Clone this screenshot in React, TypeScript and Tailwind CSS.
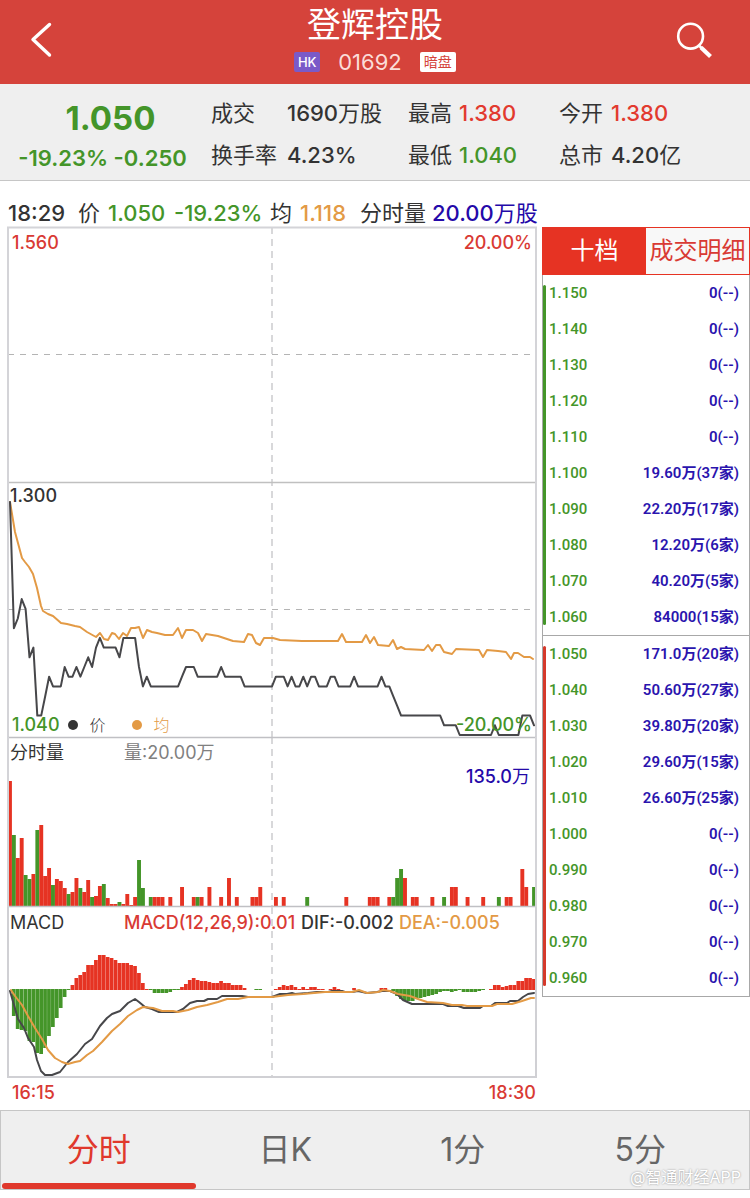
import { clsx } from "clsx";
import { useState } from "react";

type Bar = [index: number, value: number, color?: "up" | "down"];

type Level = {
    price: string;
    volume: string;
};

const MINUTES = 135;
const CHART_WIDTH = 528;
const STEP = CHART_WIDTH / MINUTES;

const RED = "#e63323";
const GREEN = "#449529";
const ORANGE = "#e39a45";
const DARK = "#47474a";

// last price per minute, in ticks of 0.01 above 1.040, as [ticks, minutes]
const priceRuns: [number, number][] = [
    [24, 1], [11, 1], [12, 1], [14, 1], [13, 1], [8, 1], [9, 1], [2, 2], [4, 1],
    [6, 1], [5, 3], [7, 1], [6, 2], [7, 1], [6, 1], [7, 1], [8, 1], [7, 1],
    [9, 1], [10, 1], [9, 4], [8, 1], [10, 4], [7, 1], [5, 1], [6, 1], [5, 8],
    [6, 1], [7, 3], [6, 6], [7, 1], [6, 5], [5, 8], [6, 3], [5, 1], [6, 1],
    [5, 2], [6, 1], [5, 1], [6, 2], [5, 3], [6, 2], [5, 4], [6, 1], [5, 6],
    [6, 1], [5, 2], [4, 1], [3, 1], [2, 11], [1, 4], [0, 9], [1, 1], [0, 6],
    [2, 3], [1, 1],
];

const pricePoints = priceRuns
    .flatMap(([ticks, minutes]) => Array<number>(minutes).fill(ticks))
    .map((ticks, i) => `${((i + 0.5) * STEP).toFixed(1)},${(508 - ticks * 9.71).toFixed(1)}`)
    .join(" ");

const averagePoints =
    "2,275 7,305 14,331 17,335 21,340 25,347 29,361 33,379 35,384 40,387 45,389 53,396 59,397 67,399 72,400 79,405 88,410 92,406 96,412 100,413 104,406 107,407 111,412 115,406 119,409 123,401 127,401 131,400 135,411 139,403 144,405 149,406 157,408 165,408 170,401 174,411 178,403 185,403 190,406 194,414 198,407 204,408 210,409 219,412 225,414 236,415 240,407 244,408 248,416 252,418 256,411 265,411 272,413 294,414 300,414 330,414 334,407 338,415 354,415 358,408 362,416 366,410 370,418 381,419 385,413 389,422 393,420 397,422 416,423 420,418 424,424 428,418 432,418 436,425 444,427 448,422 471,423 475,430 479,423 490,424 498,425 503,432 506,426 510,426 516,430 522,430 525,432";

const volumeBars: Bar[] = [
    [0, 125, "up"], [1, 71, "down"], [2, 48, "up"], [3, 68, "up"], [4, 31, "down"],
    [5, 27, "down"], [6, 32, "up"], [7, 76, "down"], [8, 81, "up"], [9, 30, "up"],
    [10, 38, "up"], [11, 21, "down"], [12, 27, "up"], [13, 25, "up"], [14, 18, "up"],
    [15, 12, "down"], [16, 14, "up"], [17, 28, "up"], [18, 18, "down"], [19, 14, "up"],
    [20, 26, "up"], [21, 9, "down"], [22, 10, "up"], [23, 20, "up"], [24, 22, "down"],
    [25, 8, "up"], [26, 2, "up"], [27, 2, "up"], [28, 4, "down"], [29, 2, "up"],
    [30, 12, "up"], [31, 1, "up"], [32, 9, "up"], [33, 46, "down"], [34, 18, "down"],
    [36, 9, "down"], [37, 9, "up"], [38, 9, "up"], [39, 9, "up"], [41, 9, "up"],
    [44, 19, "up"], [47, 9, "up"], [48, 9, "down"], [49, 9, "up"], [51, 19, "up"],
    [54, 9, "up"], [56, 28, "up"], [58, 9, "up"], [62, 9, "up"], [63, 9, "up"],
    [64, 19, "up"], [68, 9, "up"], [70, 9, "up"], [76, 9, "down"], [86, 9, "up"],
    [92, 9, "up"], [93, 9, "up"], [94, 9, "up"], [97, 9, "up"], [98, 9, "down"],
    [99, 28, "down"], [100, 37, "down"], [101, 28, "up"], [103, 9, "up"], [104, 9, "up"],
    [108, 9, "up"], [111, 9, "down"], [113, 19, "up"], [114, 19, "up"], [117, 9, "up"],
    [121, 9, "up"], [125, 9, "down"], [127, 9, "up"], [128, 9, "up"], [131, 37, "up"],
    [132, 19, "up"], [134, 19, "down"],
];

// one value per minute, positive above the zero line
const macdValues = [
    0, -27, -40, -41, -42, -52, -53, -64, -65, -59, -47, -38, -29, -19, -8, -1,
    5, 12, 15, 18, 25, 25, 30, 35, 35, 33, 32, 30, 27, 27, 27, 25, 24, 17, 7, 1,
    -1, -4, -4, -4, -4, -3, -1, -1, 3, 6, 10, 12, 10, 9, 9, 8, 7, 7, 9, 7, 7, 5,
    5, 5, 2, 0, 0, -1, -1, 0, 0, 0, 1, 3, 5, 4, 5, 3, 1, 3, 1, 3, 3, 1, 1, 0, 1,
    3, 1, 0, 0, 0, 2, 0, 0, 0, 0, 0, 0, 2, 2, 0, -2, -7, -10, -12, -12, -12,
    -10, -9, -8, -7, -6, -5, -3, -2, -2, -3, -2, -1, -3, -3, -3, -3, -2, -1, 0,
    1, 5, 5, 3, 4, 5, 5, 9, 9, 12, 12, 11,
];

const difPoints =
    "2,84 6,98 10,112 16,121 20,131 26,140 29,153 33,164 37,168 44,168 52,165 60,155 69,147 77,137 84,132 92,119 99,111 104,107 112,104 120,96 127,92 131,95 137,100 144,102 151,105 169,105 175,102 182,96 189,94 196,94 200,92 209,92 214,89 234,89 240,90 264,90 272,87 279,87 284,86 287,87 300,86 309,85 320,85 324,84 334,84 337,85 344,85 350,84 359,86 369,85 374,84 382,84 389,87 395,93 404,97 435,97 440,99 450,99 456,101 472,101 475,99 483,99 487,96 499,96 502,94 510,94 515,90 520,87 526,86";

const deaPoints =
    "3,83 7,89 14,98 20,109 27,121 34,132 40,143 47,151 54,155 60,157 67,155 72,154 79,148 85,144 94,135 104,124 112,117 120,109 129,103 135,100 145,101 154,104 165,104 170,105 180,103 189,100 199,98 210,95 219,92 230,92 240,90 264,90 280,88 295,87 317,85 344,85 351,83 359,86 370,85 375,83 382,84 390,87 402,89 410,92 419,95 435,96 444,98 454,98 459,99 484,99 489,97 504,97 514,94 523,91 526,91";

const asks: Level[] = [
    { price: "1.150", volume: "0(--)" },
    { price: "1.140", volume: "0(--)" },
    { price: "1.130", volume: "0(--)" },
    { price: "1.120", volume: "0(--)" },
    { price: "1.110", volume: "0(--)" },
    { price: "1.100", volume: "19.60万(37家)" },
    { price: "1.090", volume: "22.20万(17家)" },
    { price: "1.080", volume: "12.20万(6家)" },
    { price: "1.070", volume: "40.20万(5家)" },
    { price: "1.060", volume: "84000(15家)" },
];

const bids: Level[] = [
    { price: "1.050", volume: "171.0万(20家)" },
    { price: "1.040", volume: "50.60万(27家)" },
    { price: "1.030", volume: "39.80万(20家)" },
    { price: "1.020", volume: "29.60万(15家)" },
    { price: "1.010", volume: "26.60万(25家)" },
    { price: "1.000", volume: "0(--)" },
    { price: "0.990", volume: "0(--)" },
    { price: "0.980", volume: "0(--)" },
    { price: "0.970", volume: "0(--)" },
    { price: "0.960", volume: "0(--)" },
];

const periods = ["分时", "日K", "1分", "5分"];

function Header() {
    return (
        <header className="grid h-[84px] grid-cols-[80px_minmax(0,1fr)_80px] bg-[#d5433b] text-white">
            <button type="button" aria-label="返回" className="flex items-center pl-7">
                <svg viewBox="0 0 26 40" className="h-10 w-[26px]" fill="none" stroke="currentColor" strokeWidth="3.4">
                    <path d="M21.500 2.500 5 17.500 21.500 33" strokeLinecap="round" strokeLinejoin="round" />
                </svg>
            </button>

            <div className="flex flex-col items-center">
                <h1 className="h-[50px] text-[34px] leading-[50px]">登辉控股</h1>
                <div className="flex h-6 items-center gap-[18px] text-[22px] leading-6">
                    <span className="h-5 w-[26px] rounded-xs bg-[#7a5ac8] text-center text-[13px] leading-5 font-medium">
                        HK
                    </span>
                    <span className="text-[#fbdcd8]">01692</span>
                    <span className="h-5 w-9 rounded-xs bg-white text-center text-sm leading-5 text-[#d5433b]">
                        暗盘
                    </span>
                </div>
            </div>

            <button type="button" aria-label="搜索" className="flex items-center pl-1">
                <svg viewBox="0 0 40 40" className="size-10" fill="none" stroke="currentColor">
                    <circle cx="16.600" cy="14.200" r="12.400" strokeWidth="2.600" />
                    <path d="M25.500 24 27.500 26" strokeWidth="2.600" />
                    <path d="M27 25.500 36.500 34.500" strokeWidth="4.200" />
                </svg>
            </button>
        </header>
    );
}

function QuoteSummary() {
    return (
        <section
            aria-label="行情"
            className="flex border-b border-[#c6c6c6] bg-[#efefef] pt-2 text-[22px] leading-[42px] text-[#333]"
        >
            <div className="flex w-[205px] shrink-0 flex-col items-center pt-1.5 leading-10 text-[#449529]">
                <strong className="pl-4 text-[33px] leading-10 font-bold">1.050</strong>
                <span className="font-semibold">-19.23% -0.250</span>
            </div>

            <dl className="grid grow grid-cols-[76px_121px_51px_100px_52px_1fr] pb-1 pl-1.5">
                <dt>成交</dt>
                <dd>
                    <span className="font-medium">1690</span>万股
                </dd>
                <dt>最高</dt>
                <dd className="font-medium text-[#e23a2e]">1.380</dd>
                <dt>今开</dt>
                <dd className="font-medium text-[#e23a2e]">1.380</dd>
                <dt>换手率</dt>
                <dd className="font-medium">4.23%</dd>
                <dt>最低</dt>
                <dd className="font-medium text-[#449529]">1.040</dd>
                <dt>总市</dt>
                <dd>
                    <span className="font-medium">4.20</span>亿
                </dd>
            </dl>
        </section>
    );
}

function TickLine() {
    return (
        <p className="flex h-[46px] items-end px-2 text-[22px] leading-7 whitespace-nowrap text-[#333]">
            <span className="w-[70px] font-medium">18:29</span>
            <span className="w-[30px]">价</span>
            <span className="w-[66px] font-medium text-[#449529]">1.050</span>
            <span className="w-24 font-medium text-[#449529]">-19.23%</span>
            <span className="w-[30px]">均</span>
            <span className="w-[60px] font-medium text-[#e39a45]">1.118</span>
            <span className="w-[72px]">分时量</span>
            <span className="text-[#2409a9]">
                <span className="font-medium">20.00</span>万股
            </span>
        </p>
    );
}

function Plot({ height, children }: { height: number; children: React.ReactNode }) {
    return (
        <svg
            viewBox={`0 0 ${CHART_WIDTH} ${height}`}
            preserveAspectRatio="none"
            className="block size-full overflow-visible"
            fill="none"
            aria-hidden="true"
        >
            <path d={`M264 0V${height}`} stroke="#d8d8da" strokeWidth="2" strokeDasharray="7 5" />
            {children}
        </svg>
    );
}

function Line({ points, color }: { points: string; color: string }) {
    return <polyline points={points} stroke={color} strokeWidth="2" strokeLinejoin="round" strokeLinecap="round" />;
}

function PriceChart() {
    return (
        <figure aria-label="分时走势" className="relative h-[510px] text-lg leading-6 font-medium">
            <Plot height={510}>
                <path d="M0 127.500H528M0 382.500H528" stroke="#b4b4b4" strokeDasharray="6 6" />
                <path d="M0 255.500H528" stroke="#c0c0c0" strokeWidth="1.500" />
                <path d="M0 510V.5H528V510" stroke="#d4d4d8" strokeWidth="2" />
                <Line points={averagePoints} color={ORANGE} />
                <Line points={pricePoints} color={DARK} />
            </Plot>
            <div className="absolute inset-x-1 top-1 flex justify-between text-[#d93a34]">
                <span>1.560</span>
                <span>20.00%</span>
            </div>
            <span className="absolute top-1/2 left-0.5 mt-0.5 text-[#333]">1.300</span>
            <figcaption className="absolute inset-x-1 bottom-0 flex items-center text-[#449529]">
                <span>1.040</span>
                <span className="ml-2 size-2.5 rounded-full bg-[#333]" />
                <span className="ml-3 text-base font-light text-[#333]">价</span>
                <span className="ml-[26px] size-2.5 rounded-full bg-[#e39a45]" />
                <span className="ml-3 text-base font-light text-[#e39a45]">均</span>
                <span className="ml-auto">-20.00%</span>
            </figcaption>
        </figure>
    );
}

function VolumeChart() {
    return (
        <figure aria-label="分时量" className="relative h-[170px] text-lg leading-6">
            <Plot height={170}>
                {volumeBars.map(([index, value, color]) => (
                    <rect
                        key={index}
                        x={index * STEP}
                        y={169 - value}
                        width={STEP}
                        height={value}
                        fill={color === "up" ? RED : GREEN}
                    />
                ))}
                <path d="M0 .5H528M0 169.500H528" stroke="#c0c0c4" strokeWidth="1.500" />
                <path d="M0 0V170M528 0V170" stroke="#d4d4d8" strokeWidth="2" />
            </Plot>
            <figcaption className="absolute top-1 left-0.5 flex text-[#333]">
                <span className="w-[114px]">分时量</span>
                <span className="text-[#808080]">量:20.00万</span>
            </figcaption>
            <span className="absolute top-7 right-1.5 text-[#2409a9]">
                <span className="font-medium">135.0</span>万
            </span>
        </figure>
    );
}

function MacdChart() {
    return (
        <figure aria-label="MACD" className="relative h-[170px] text-lg leading-6">
            <Plot height={170}>
                {macdValues.map((value, index) =>
                    value === 0 ? null : (
                        <rect
                            key={index}
                            x={index * STEP}
                            y={value > 0 ? 83 - value : 82}
                            width={STEP - 0.2}
                            height={Math.abs(value)}
                            fill={value > 0 ? RED : GREEN}
                        />
                    )
                )}
                <path d="M0 0V170H528V0" stroke="#d0d0d4" strokeWidth="2" />
                <Line points={difPoints} color={DARK} />
                <Line points={deaPoints} color={ORANGE} />
            </Plot>
            <figcaption className="absolute top-1 left-0.5 flex whitespace-nowrap text-[#333]">
                <span className="w-[114px]">MACD</span>
                <span className="w-[177px] font-medium text-[#d93a34]">MACD(12,26,9):0.01</span>
                <span className="w-[98px] font-medium">DIF:-0.002</span>
                <span className="font-medium text-[#e39a45]">DEA:-0.005</span>
            </figcaption>
        </figure>
    );
}

function BookSide({ levels, side }: { levels: Level[]; side: "ask" | "bid" }) {
    return (
        <div className="flex">
            <span
                className={clsx(
                    "my-2.5 w-[3px] shrink-0 rounded-sm",
                    side === "ask" ? "bg-[#449529]" : "bg-[#d5392b]"
                )}
            />
            <table className="w-full" aria-label={side === "ask" ? "卖盘" : "买盘"}>
                <tbody>
                    {levels.map((level) => (
                        <tr key={level.price} className="h-9">
                            <td className="pl-[3px] font-medium text-[#449529]">{level.price}</td>
                            <td className="pr-2.5 text-right text-[#2a14ae]">{level.volume}</td>
                        </tr>
                    ))}
                </tbody>
            </table>
        </div>
    );
}

function OrderBook() {
    const [tab, setTab] = useState("十档");

    return (
        <aside className="w-52 shrink-0">
            <div className="grid h-12 grid-cols-2 border border-[#e63323] text-2xl whitespace-nowrap">
                {["十档", "成交明细"].map((name) => (
                    <button
                        key={name}
                        type="button"
                        onClick={() => setTab(name)}
                        className={clsx(
                            "flex items-center justify-center",
                            tab === name ? "bg-[#e63323] text-white" : "bg-[#f8f8f8] text-[#d93a34]"
                        )}
                    >
                        {name}
                    </button>
                ))}
            </div>
            <div className="divide-y divide-[#a8a8a8] border-x border-b border-[#a8a8a8] font-[Roboto,'Noto_Sans_CJK_SC',sans-serif] text-[15px] leading-5 font-semibold">
                <BookSide levels={asks} side="ask" />
                <BookSide levels={bids} side="bid" />
            </div>
        </aside>
    );
}

function PeriodTabs() {
    const [period, setPeriod] = useState(periods[0]);

    return (
        <nav className="relative grid h-20 grid-cols-[195fr_177fr_177fr_177fr] border border-[#c6c6c6] bg-[#efefef] pr-5 text-[32px] text-[#666]">
            {periods.map((name) => (
                <button
                    key={name}
                    type="button"
                    onClick={() => setPeriod(name)}
                    className={clsx(
                        "relative flex items-center justify-center",
                        period === name && "text-[#e0382c]"
                    )}
                >
                    {name}
                    {period === name ? (
                        <span className="absolute inset-x-px bottom-0 h-1.5 rounded-sm bg-[#e0382c]" />
                    ) : null}
                </button>
            ))}
            <span className="absolute right-2 bottom-0 text-base leading-6 text-white [text-shadow:0_0_2px_#888]">
                @智通财经APP
            </span>
        </nav>
    );
}

export default function App() {
    return (
        <div className="min-h-screen bg-white font-[Inter,'Noto_Sans_CJK_SC',sans-serif]">
            <Header />
            <QuoteSummary />
            <TickLine />
            <main className="flex gap-1.5 pl-2">
                <div className="min-w-0 grow">
                    <PriceChart />
                    <VolumeChart />
                    <MacdChart />
                    <div className="flex h-[33px] justify-between pt-1 pl-1 text-lg leading-6 font-medium text-[#d93a34]">
                        <time>16:15</time>
                        <time>18:30</time>
                    </div>
                </div>
                <OrderBook />
            </main>
            <PeriodTabs />
        </div>
    );
}
